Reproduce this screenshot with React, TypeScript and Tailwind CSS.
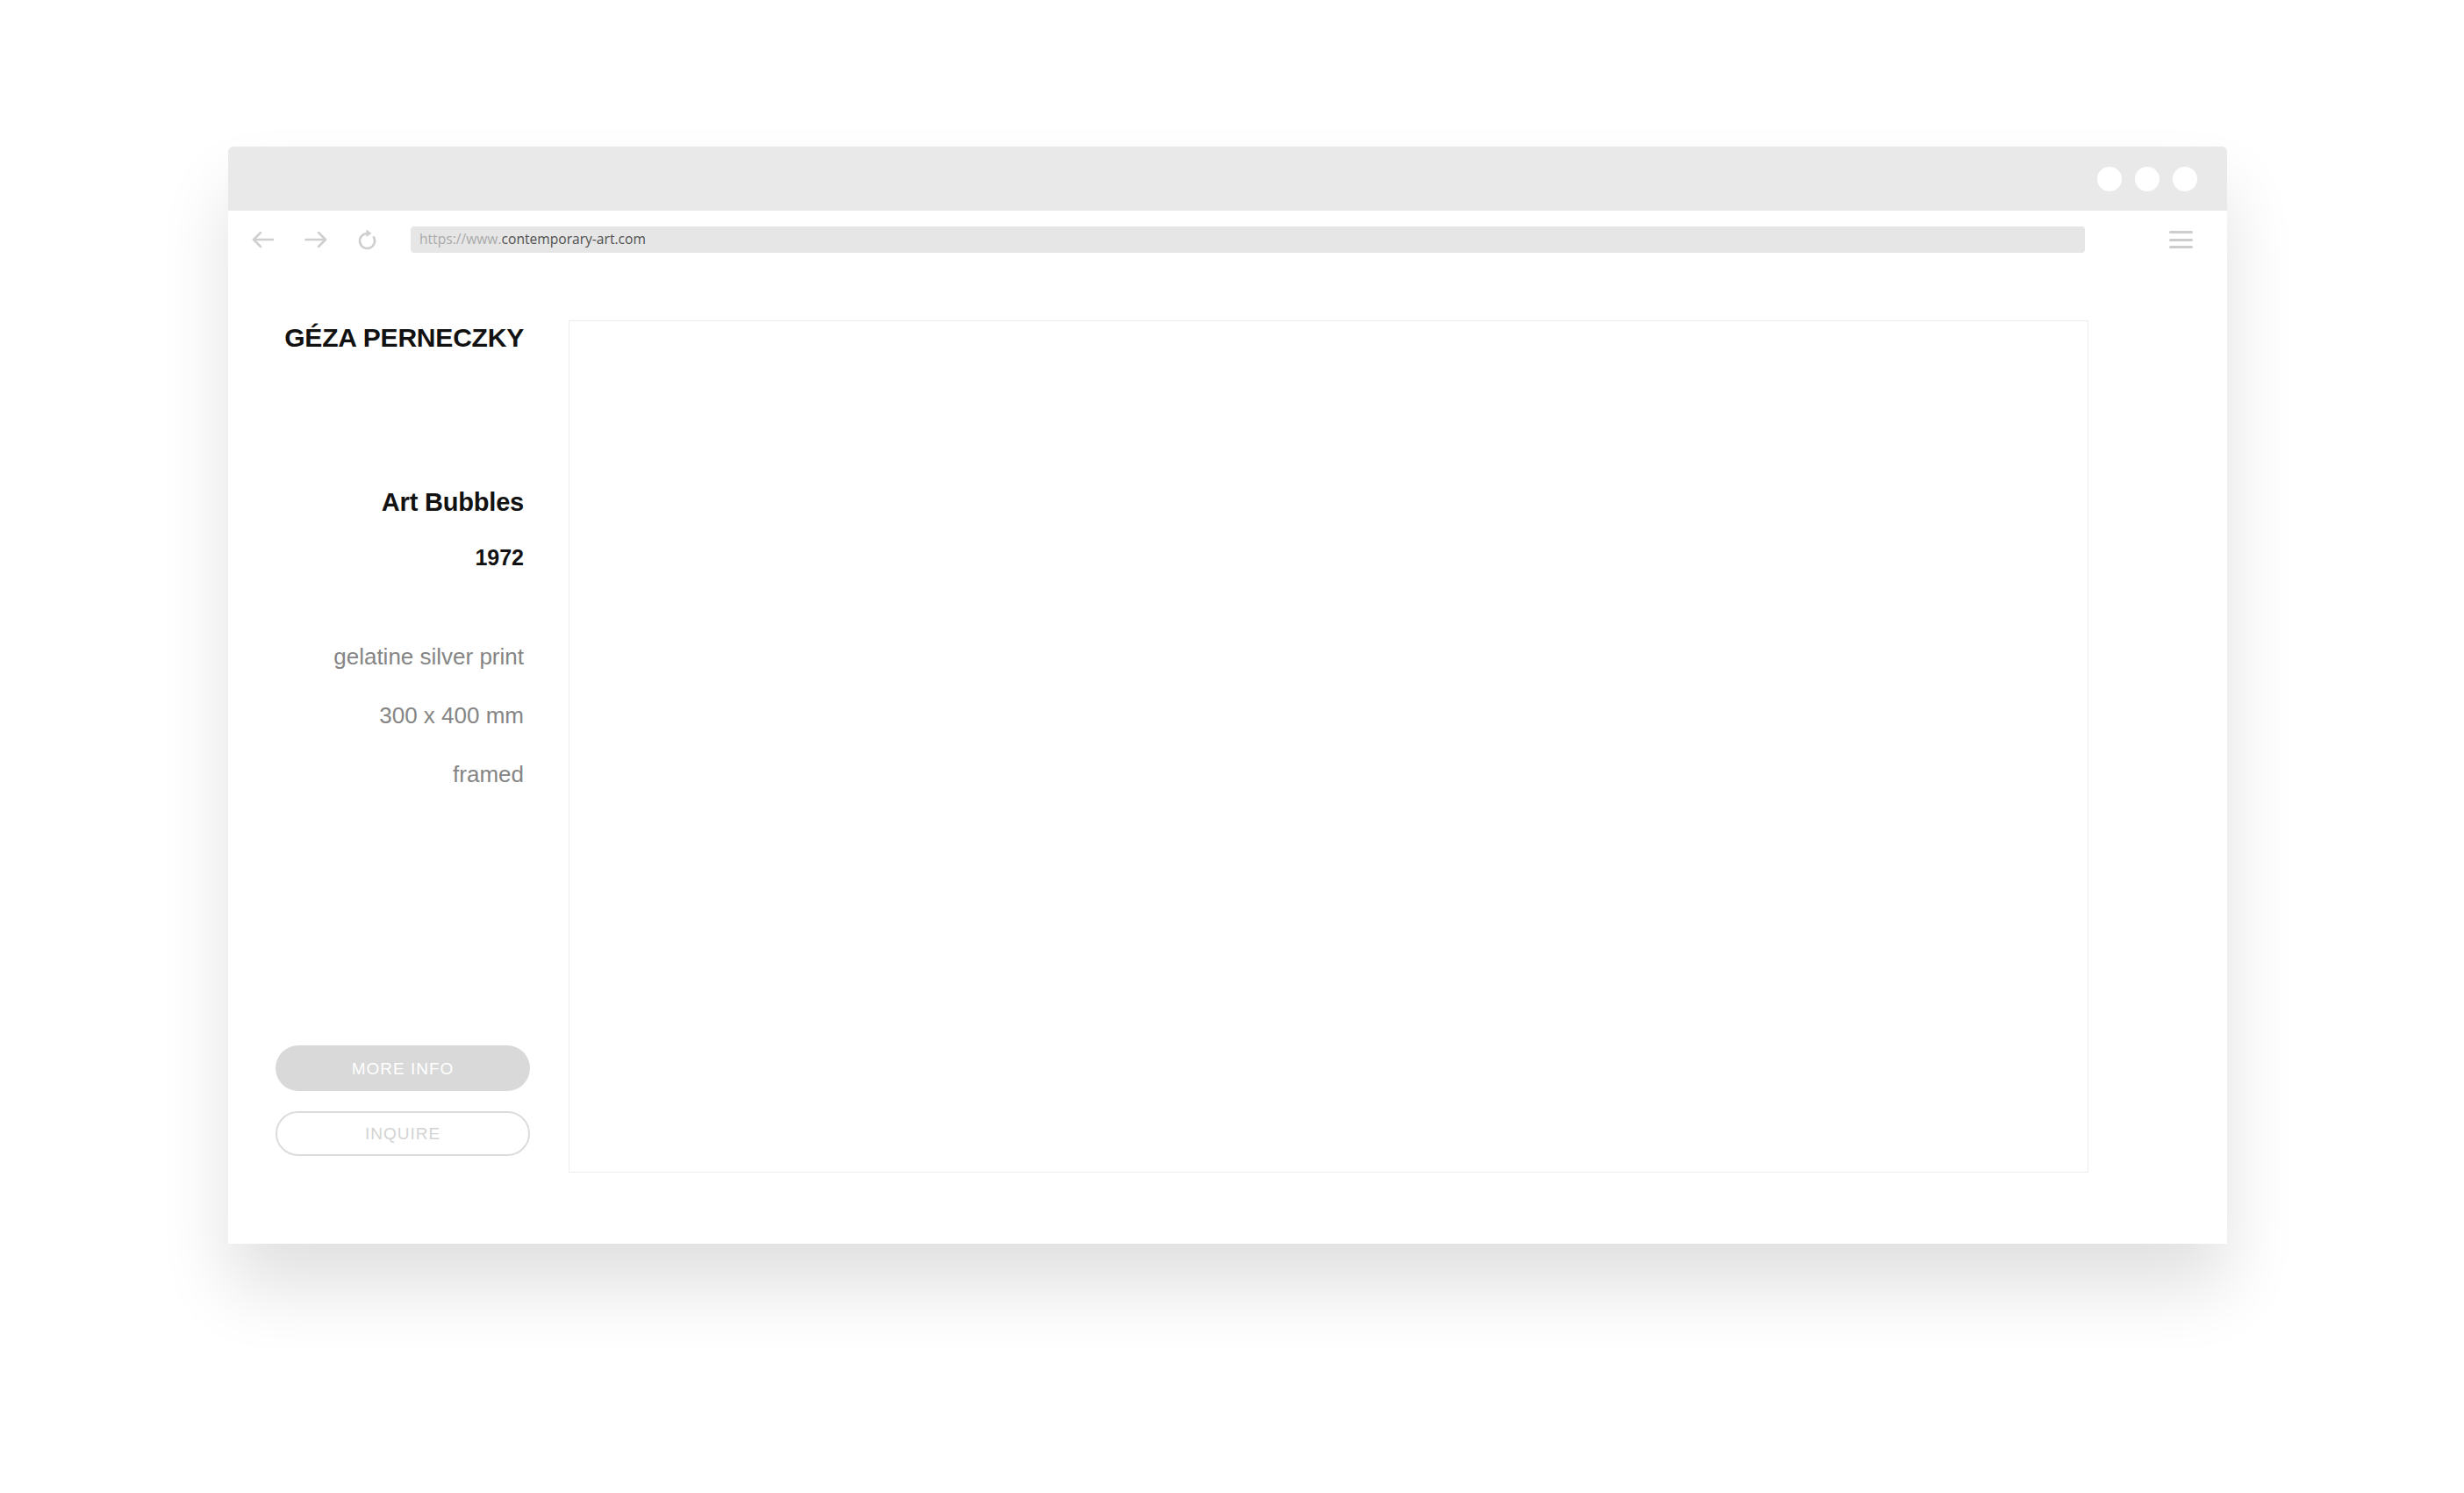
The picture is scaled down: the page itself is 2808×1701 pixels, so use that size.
import { ReactNode } from "react";

const sans = { fontFamily: '"Liberation Sans", Arial, sans-serif' };

const Dot = () => <div className="w-[28px] h-[28px] rounded-full bg-white" />;

const Line = ({ children, className }: { children: ReactNode; className: string }) => (
    <div className={"text-right pr-[7px] leading-none whitespace-nowrap " + className}>{children}</div>
);

const App = () => {
    return (
        <div className="w-[2808px] h-[1701px] bg-white pt-[167px] pl-[260px]" style={sans}>
            <div className="w-[2278px] h-[1250px] bg-white rounded-t-[6px] shadow-[0_50px_80px_rgba(0,0,0,0.12)] flex flex-col">
                {/* title bar */}
                <div className="h-[73px] shrink-0 bg-[#e9e9e9] rounded-t-[6px] flex items-center justify-end gap-[15px] pr-[34px]">
                    <Dot />
                    <Dot />
                    <Dot />
                </div>

                {/* nav row */}
                <div className="h-[66px] shrink-0 flex items-center pl-[27px] pr-[39px]">
                    <svg width="25" height="20" viewBox="0 0 25 20" fill="none" stroke="#cfcfcf" strokeWidth="2.5" strokeLinecap="round" strokeLinejoin="round">
                        <path d="M2 10H24" />
                        <path d="M10 2L2 10L10 18" />
                    </svg>
                    <svg className="ml-[35px]" width="26" height="20" viewBox="0 0 26 20" fill="none" stroke="#cfcfcf" strokeWidth="2.5" strokeLinecap="round" strokeLinejoin="round">
                        <path d="M1.5 10H24" />
                        <path d="M16 2L24 10L16 18" />
                    </svg>
                    <svg className="ml-[34px]" width="23" height="26" viewBox="0 0 23 26" fill="none">
                        <path d="M11.5 6A8.5 8.5 0 1 0 18.86 10.25" stroke="#cfcfcf" strokeWidth="2.6" strokeLinecap="round" />
                        <polygon points="10.5,1.5 16.5,5.8 10.5,10" fill="#cfcfcf" />
                    </svg>
                    <div className="ml-[38px] flex-1 h-[30px] rounded-[4px] bg-[#e6e6e6] flex items-center pl-[10px] text-[15.6px]" style={{ fontFamily: '"Open Sans", sans-serif' }}>
                        <span className="text-[#a9a9a9]">https://www.</span>
                        <span className="text-[#4f4f4f]">contemporary-art.com</span>
                    </div>
                    <div className="ml-[96px] flex flex-col gap-[5.5px]">
                        <div className="w-[27px] h-[3px] rounded-full bg-[#cdcdcd]" />
                        <div className="w-[27px] h-[3px] rounded-full bg-[#cdcdcd]" />
                        <div className="w-[27px] h-[3px] rounded-full bg-[#cdcdcd]" />
                    </div>
                </div>

                {/* page */}
                <main className="flex flex-1 pt-[59px] pb-[81px] pl-[54px] pr-[158px] gap-[44px]">
                    <aside className="w-[290px] shrink-0 flex flex-col">
                        <Line className="mt-[5px] text-[30px] font-bold tracking-[-0.2px] text-[#111111]">GÉZA PERNECZKY</Line>
                        <Line className="mt-[158px] text-[29px] font-bold tracking-[-0.2px] text-[#111111]">Art Bubbles</Line>
                        <Line className="mt-[36px] text-[25px] font-bold text-[#111111]">1972</Line>
                        <Line className="mt-[87px] text-[26px] text-[#858585]">gelatine silver print</Line>
                        <Line className="mt-[41px] text-[26px] text-[#858585]">300 x 400 mm</Line>
                        <Line className="mt-[41px] text-[26px] text-[#858585]">framed</Line>

                        <div className="mt-auto mb-[19px] flex flex-col gap-[23px]">
                            <button className="h-[52px] rounded-full bg-[#d9d9d9] text-white text-[19px] tracking-[1px] leading-none">
                                MORE INFO
                            </button>
                            <button className="h-[51px] rounded-full border-2 border-[#dcdcdc] text-[#d3d3d3] text-[19px] tracking-[1px] leading-none">
                                INQUIRE
                            </button>
                        </div>
                    </aside>
                    <div className="flex-1 border border-[#ededed]" />
                </main>
            </div>
        </div>
    );
};

export default App;
